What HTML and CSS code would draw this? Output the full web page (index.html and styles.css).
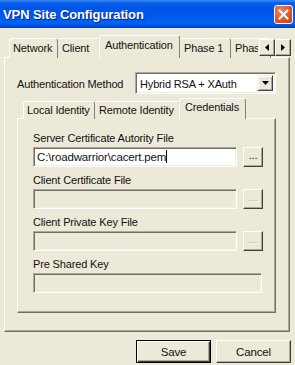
FILE: index.html
```html
<!DOCTYPE html>
<html>
<head>
<meta charset="utf-8">
<link rel="stylesheet" href="styles.css">
</head>
<body>
<div class="window">
  <div class="titlebar">
    <span class="title">VPN Site Configuration</span>
    <div class="close">
      <svg width="11" height="11" viewBox="0 0 11 11"><path d="M1.5 1.5 L9.5 9.5 M9.5 1.5 L1.5 9.5" stroke="#fff" stroke-width="2" stroke-linecap="square"/></svg>
    </div>
  </div>
  <div class="content">
    <div class="tabstrip outer-tabs">
      <div class="tab t-net">Network</div>
      <div class="tab t-client">Client</div>
      <div class="tab sel t-auth">Authentication</div>
      <div class="tab t-p1">Phase 1</div>
      <div class="tab t-p2">Phase 2</div>
      <div class="spin">
        <div class="spinbtn"><svg width="4" height="7" viewBox="0 0 4 7"><path d="M4 0 L0 3.5 L4 7 Z" fill="#000"/></svg></div>
        <div class="spinbtn"><svg width="4" height="7" viewBox="0 0 4 7"><path d="M0 0 L4 3.5 L0 7 Z" fill="#000"/></svg></div>
      </div>
    </div>
    <div class="panel outer">
      <div class="method-row">
        <span class="method-label">Authentication Method</span>
        <div class="combo">
          <span class="combo-text">Hybrid RSA + XAuth</span>
          <div class="dropbtn"><svg width="7" height="4" viewBox="0 0 7 4"><path d="M0 0 L7 0 L3.5 4 Z" fill="#000"/></svg></div>
        </div>
      </div>
      <div class="tabstrip inner-tabs">
        <div class="tab t-local">Local Identity</div>
        <div class="tab t-remote">Remote Identity</div>
        <div class="tab sel t-cred">Credentials</div>
      </div>
      <div class="panel inner">
        <div class="field-label">Server Certificate Autority File</div>
        <div class="field-row">
          <div class="field enabled">C:\roadwarrior\cacert.pem<span class="caret"></span></div>
          <div class="browse">...</div>
        </div>
        <div class="field-label">Client Certificate File</div>
        <div class="field-row">
          <div class="field"></div>
          <div class="browse disabled">...</div>
        </div>
        <div class="field-label">Client Private Key File</div>
        <div class="field-row">
          <div class="field"></div>
          <div class="browse disabled">...</div>
        </div>
        <div class="field-label">Pre Shared Key</div>
        <div class="field-row">
          <div class="field wide"></div>
        </div>
      </div>
    </div>
    <div class="buttons">
      <div class="btn default">Save</div>
      <div class="btn">Cancel</div>
    </div>
  </div>
</div>
</body>
</html>
```
FILE: styles.css
```css
html, body {
  margin: 0;
  padding: 0;
  background: #ECE9D8;
}
.window {
  width: 295px;
  height: 365px;
  background: #ECE9D8;
  font-family: "Liberation Sans", Arial, sans-serif;
  font-size: 11px;
  letter-spacing: -0.15px;
  color: #111;
  overflow: hidden;
}
.titlebar {
  height: 28px;
  display: flex;
  align-items: center;
  justify-content: space-between;
  padding: 0 2px 0 3px;
  box-sizing: border-box;
  background: linear-gradient(#3A8CF5 0px, #0A5FEA 3px, #0055E8 8px, #0058EE 16px, #0062F6 23px, #0050D8 26px, #003FB8 28px);
}
.title {
  color: #fff;
  font-weight: bold;
  font-size: 13px;
  letter-spacing: -0.1px;
  text-shadow: 1px 1px 0 #0A1F8A;
  padding-top: 1px;
}
.close {
  width: 19px;
  height: 19px;
  box-sizing: border-box;
  border: 1px solid #fff;
  border-radius: 3px;
  background: radial-gradient(circle at 35% 30%, #F08A6A 0, #E0542E 55%, #C63A16 100%);
  display: flex;
  align-items: center;
  justify-content: center;
  margin-top: 1px;
}
.content {
  display: flex;
  flex-direction: column;
}
.tabstrip {
  display: flex;
  align-items: flex-end;
  position: relative;
  z-index: 2;
}
.outer-tabs {
  height: 22px;
  margin-top: 8px;
  padding-left: 9px;
  margin-bottom: -1px;
}
.tab {
  box-sizing: border-box;
  height: 20px;
  border: 1px solid;
  border-color: #fff #808080 transparent #fff;
  border-bottom: none;
  border-radius: 3px 3px 0 0;
  display: flex;
  align-items: center;
  padding-left: 3px;
  white-space: nowrap;
  overflow: hidden;
  background: #ECE9D8;
  padding-bottom: 1px;
}
.tab.sel {
  height: 23px;
  padding-bottom: 4px;
}
.t-net { width: 49px; }
.t-client { width: 42px; border-left: none; padding-left: 4px; }
.t-auth { width: 81px; margin-left: -1px; padding-left: 5px; }
.t-p1 { width: 51px; border-left: none; padding-left: 4px; }
.t-p2 { width: 40px; border-left: none; padding-left: 4px; }
.spin {
  position: absolute;
  left: 258px;
  top: 3px;
  display: flex;
  background: #ECE9D8;
  padding-left: 1px;
}
.spinbtn {
  width: 16px;
  height: 17px;
  box-sizing: border-box;
  border: 1px solid;
  border-color: #fff #404040 #404040 #fff;
  box-shadow: inset -1px -1px 0 #ACA899;
  background: #ECE9D8;
  display: flex;
  align-items: center;
  justify-content: center;
}
.panel {
  box-sizing: border-box;
  border: 1px solid;
  border-color: #fff #716F64 #716F64 #fff;
  box-shadow: inset -1px -1px 0 #ACA899;
  position: relative;
  z-index: 1;
}
.panel.outer {
  margin-left: 4px;
  width: 286px;
  height: 275px;
  padding: 14px 0 0 12px;
}
.method-row {
  display: flex;
  align-items: center;
  height: 22px;
}
.method-label {
  width: 118px;
  padding-top: 1px;
}
.combo {
  width: 141px;
  height: 22px;
  box-sizing: border-box;
  border: 1px solid;
  border-color: #ACA899 #fff #fff #ACA899;
  box-shadow: inset 1px 1px 0 #716F64, inset -1px -1px 0 #F1EFE2;
  background: #fff;
  display: flex;
  align-items: center;
  justify-content: space-between;
  padding: 0 2px 0 4px;
}
.combo-text {
  padding-top: 1px;
}
.dropbtn {
  width: 16px;
  height: 16px;
  box-sizing: border-box;
  border: 1px solid;
  border-color: #F1EFE2 #404040 #404040 #F1EFE2;
  box-shadow: inset 1px 1px 0 #fff, inset -1px -1px 0 #ACA899;
  background: #ECE9D8;
  display: flex;
  align-items: center;
  justify-content: center;
}
.inner-tabs {
  height: 20px;
  margin-top: 5px;
  padding-left: 6px;
  margin-bottom: -1px;
}
.inner-tabs .tab {
  height: 18px;
}
.inner-tabs .tab.sel {
  height: 21px;
}
.t-local { width: 72px; padding-left: 3px; }
.t-remote { width: 85px; border-left: none; padding-left: 4px; }
.t-cred { width: 67px; margin-left: -1px; padding-left: 5px; }
.panel.inner {
  width: 259px;
  height: 195px;
  padding: 12px 0 0 15px;
}
.field-label {
  height: 14px;
  line-height: 14px;
  margin-bottom: 2px;
}
.field-row {
  display: flex;
  gap: 6px;
  margin-bottom: 6px;
}
.field {
  width: 204px;
  height: 20px;
  box-sizing: border-box;
  border: 1px solid;
  border-color: #ACA899 #fff #fff #ACA899;
  box-shadow: inset 1px 1px 0 #716F64, inset -1px -1px 0 #F1EFE2;
  background: #ECE9D8;
  padding: 0 0 0 3px;
  line-height: 18px;
  font-size: 11.5px;
  white-space: nowrap;
}
.field.enabled {
  background: #fff;
}
.field.wide {
  width: 229px;
}
.caret {
  display: inline-block;
  width: 1px;
  height: 13px;
  background: #000;
  vertical-align: -2px;
}
.browse {
  width: 20px;
  height: 20px;
  box-sizing: border-box;
  border: 1px solid;
  border-color: #fff #404040 #404040 #fff;
  box-shadow: inset -1px -1px 0 #ACA899;
  background: #ECE9D8;
  text-align: center;
  line-height: 15px;
  font-size: 11px;
}
.browse.disabled {
  color: #ACA899;
  text-shadow: 1px 1px 0 #fff;
}
.buttons {
  display: flex;
  justify-content: flex-end;
  gap: 5px;
  margin-top: 8px;
  padding-right: 4px;
}
.btn {
  width: 75px;
  height: 23px;
  box-sizing: border-box;
  border: 1px solid;
  border-color: #fff #404040 #404040 #fff;
  box-shadow: inset -1px -1px 0 #ACA899;
  background: #ECE9D8;
  display: flex;
  align-items: center;
  justify-content: center;
  font-size: 11.5px;
}
.btn.default {
  border: 1px solid #000;
  box-shadow: inset 1px 1px 0 #fff, inset -1px -1px 0 #404040, inset -2px -2px 0 #ACA899;
}
```
